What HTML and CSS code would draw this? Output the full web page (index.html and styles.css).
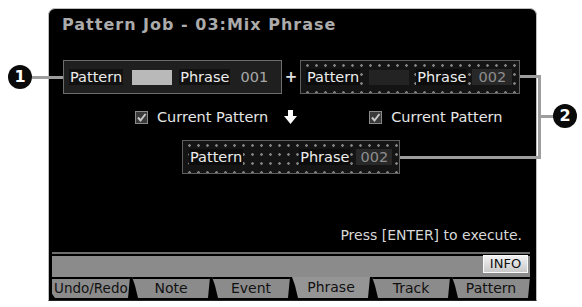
FILE: index.html
```html
<!DOCTYPE html>
<html>
<head>
<meta charset="utf-8">
<link rel="stylesheet" href="styles.css">
</head>
<body>
<div class="page">
  <div class="screen">
    <div class="title">Pattern Job - 03:Mix Phrase</div>

    <div class="row-sources">
      <div class="field solid src1">
        <span class="lbl">Pattern</span>
        <span class="slot slot-light"></span>
        <span class="lbl lbl-phrase">Phrase</span>
        <span class="num">001</span>
      </div>
      <span class="plus">+</span>
      <div class="field dotted src2">
        <span class="lbl">Pattern</span>
        <span class="slot slot-dark"></span>
        <span class="lbl lbl-phrase">Phrase</span>
        <span class="numbox">002</span>
      </div>
    </div>

    <div class="row-checks">
      <svg class="check" width="13" height="13" viewBox="0 0 13 13"><rect x="0.5" y="0.5" width="12" height="12" fill="#3a3a3a" stroke="#8a8a8a"/><polyline points="3,6.5 5.5,9.5 10.5,3" fill="none" stroke="#c8c8c8" stroke-width="2"/></svg>
      <span class="check-lbl">Current Pattern</span>
      <svg class="arrow" width="13" height="15" viewBox="0 0 13 15"><rect x="4" y="0" width="5" height="7" fill="#fff"/><polygon points="0,6 13,6 6.5,14" fill="#fff"/></svg>
      <svg class="check check-right" width="13" height="13" viewBox="0 0 13 13"><rect x="0.5" y="0.5" width="12" height="12" fill="#3a3a3a" stroke="#8a8a8a"/><polyline points="3,6.5 5.5,9.5 10.5,3" fill="none" stroke="#c8c8c8" stroke-width="2"/></svg>
      <span class="check-lbl">Current Pattern</span>
    </div>

    <div class="row-dest">
      <div class="field dotted dest">
        <span class="lbl">Pattern</span>
        <span class="lbl lbl-phrase-dest">Phrase</span>
        <span class="numbox numbox-dest">002</span>
      </div>
    </div>

    <div class="hint">Press [ENTER] to execute.</div>
    <div class="rule"></div>
    <div class="infobar"><span class="info">INFO</span></div>
    <div class="tabs">
      <div class="tab tab-first">Undo/Redo</div>
      <div class="tab">Note</div>
      <div class="tab">Event</div>
      <div class="tab tab-active">Phrase</div>
      <div class="tab">Track</div>
      <div class="tab">Pattern</div>
    </div>
  </div>

  <div class="callout callout-1">1</div>
  <div class="leader leader-1"></div>
  <div class="leader leader-2a"></div>
  <div class="leader leader-2v"></div>
  <div class="leader leader-2b"></div>
  <div class="leader leader-2c"></div>
  <div class="callout callout-2">2</div>
</div>
</body>
</html>
```

FILE: styles.css
```css
* { box-sizing: border-box; }
html, body { margin: 0; padding: 0; background: #fff; }
.page {
  position: relative;
  width: 582px;
  height: 307px;
  overflow: hidden;
  background: #fff;
  font-family: "DejaVu Sans", sans-serif;
}
.screen {
  margin: 8px 0 0 48px;
  width: 489px;
  height: 293px;
  background: #000;
  border: 1px solid #bdbdbd;
  border-bottom-color: #222;
  border-radius: 7px 7px 0 0;
  display: flex;
  flex-direction: column;
}
.title {
  padding: 6px 0 0 13px;
  height: 26px;
  line-height: 20px;
  font-size: 16px;
  font-weight: bold;
  letter-spacing: 1px;
  color: #ababab;
  white-space: nowrap;
}
.row-sources {
  margin-top: 25px;
  padding-left: 14px;
  display: flex;
  align-items: center;
  height: 34px;
}
.field {
  height: 34px;
  display: flex;
  align-items: center;
  font-size: 14.5px;
  line-height: 16px;
  color: #ececec;
  white-space: nowrap;
}
.solid {
  background: #1f1f1f;
  border: 1px solid #6c6c6c;
}
.dotted {
  border: 1px solid #5e5e5e;
  background-color: #141414;
  background-image: radial-gradient(circle, #808080 1px, transparent 1.6px);
  background-size: 9px 9px;
  background-position: 2px 0px;
}
.src1 { width: 219px; padding-left: 5px; }
.src2 { width: 220px; padding-left: 5px; }
.lbl { background: #111; padding: 0 1px; }
.dotted .lbl { background: #0c0c0c; }
.slot { display: block; width: 40px; height: 15px; margin-left: 9px; }
.slot-light { background: #b9b9b9; }
.slot-dark { background: #232323; }
.lbl-phrase { margin-left: 7px; }
.num { margin-left: 10px; color: #a9a9a9; }
.numbox {
  margin-left: 5px;
  width: 40px;
  height: 16px;
  text-align: center;
  background: #282828;
  color: #8e8e8e;
}
.plus {
  width: 18px;
  text-align: center;
  color: #e0e0e0;
  font-size: 15px;
  font-weight: bold;
}
.row-checks {
  margin-top: 15px;
  height: 16px;
  padding-left: 86px;
  display: flex;
  align-items: center;
  font-size: 14.5px;
  color: #e6e6e6;
  white-space: nowrap;
}
.check { display: block; margin-right: 9px; }
.arrow { display: block; margin-left: 16px; }
.check-right { margin-left: 72px; }
.row-dest {
  margin-top: 15px;
  padding-left: 133px;
  display: flex;
}
.dest { width: 218px; padding-left: 6px; }
.lbl-phrase-dest { margin-left: 56px; }
.numbox-dest { width: 36px; margin-left: 6px; }
.hint {
  margin-top: 53px;
  height: 16px;
  line-height: 16px;
  padding-right: 14px;
  text-align: right;
  font-size: 14px;
  color: #d8d8d8;
  white-space: nowrap;
}
.rule {
  margin: 9px 6px 0 3px;
  height: 2px;
  background: #6e6e6e;
}
.infobar {
  margin: 2px 6px 0 3px;
  height: 21px;
  background: #8b8b8b;
  display: flex;
  justify-content: flex-end;
  align-items: flex-start;
}
.info {
  margin-top: -1px;
  margin-right: 2px;
  width: 45px;
  height: 18px;
  border: 1px solid #fafafa;
  background: linear-gradient(#f2f2f2, #c9c9c9);
  color: #111;
  font-size: 13px;
  line-height: 16px;
  text-align: center;
}
.tabs {
  margin: 0 6px 0 3px;
  height: 21px;
  display: grid;
  grid-template-columns: repeat(6, 1fr);
  column-gap: 2px;
}
.tab {
  background: #8b8b8b;
  border-top: 2px solid #000;
  color: #111;
  font-size: 14px;
  line-height: 18px;
  text-align: center;
  white-space: nowrap;
  overflow: hidden;
  clip-path: polygon(0 0, 100% 0, calc(100% - 2px) 100%, 6px 100%, 3px 40%);
}
.tab-first {
  text-align: left;
  padding-left: 2px;
  font-size: 13.5px;
  clip-path: polygon(0 0, 100% 0, calc(100% - 2px) 100%, 3px 100%, 0 80%);
}
.tab-active {
  border-top: 0;
  line-height: 20px;
  background: #959595;
}
.callout {
  position: absolute;
  width: 24px;
  height: 24px;
  border-radius: 50%;
  background: #0a0a0a;
  color: #fff;
  font-size: 16px;
  font-weight: bold;
  line-height: 24px;
  text-align: center;
}
.callout-1 { left: 8px; top: 65px; }
.callout-2 { left: 553px; top: 104px; }
.leader {
  position: absolute;
  background: #9d9d9d;
}
.leader-1 { left: 32px; top: 76px; width: 31px; height: 3px; }
.leader-2a { left: 520px; top: 75px; width: 21px; height: 3px; }
.leader-2v { left: 538px; top: 75px; width: 3px; height: 84px; }
.leader-2b { left: 400px; top: 156px; width: 141px; height: 3px; }
.leader-2c { left: 540px; top: 115px; width: 14px; height: 3px; }
```
